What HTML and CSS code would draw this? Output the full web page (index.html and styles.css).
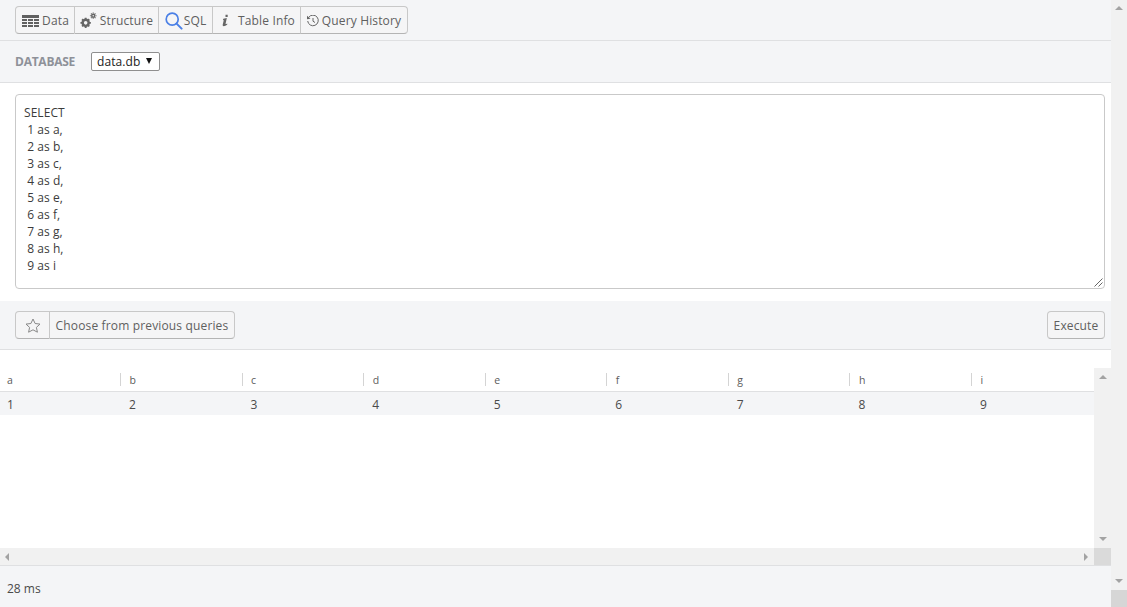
FILE: index.html
```html
<!DOCTYPE html>
<html lang="en">
<head>
<meta charset="utf-8">
<title>SQL</title>
<link rel="stylesheet" href="styles.css">
</head>
<body>
<div class="app">
  <main class="main">
    <nav class="toolbar">
      <div class="btn-group">
        <button class="btn btn-data">
          <svg class="ico" width="17" height="12" viewBox="0 0 17 12"><path fill="#606060" d="M0 0h17v3H0zM0 4h5v2H0zM6 4h5v2H6zM12 4h5v2h-5zM0 7h5v2H0zM6 7h5v2H6zM12 7h5v2h-5zM0 10h5v2H0zM6 10h5v2H6zM12 10h5v2h-5z"/></svg>
          <span>Data</span>
        </button>
        <button class="btn btn-structure">
          <svg class="ico" width="17" height="17" viewBox="0 0 18 17"><g fill="none" stroke="#666"><circle cx="6" cy="11" r="3.200" stroke-width="2.600"/><path stroke-width="2" d="M6 5.500v2M6 14.500v2M.5 11h2M9.500 11h2M2.200 7.200l1.400 1.400M8.400 13.400l1.400 1.400M2.200 14.800l1.400-1.400M8.400 8.600l1.400-1.400"/><circle cx="14" cy="3.500" r="1.600" stroke-width="1.600"/><path stroke-width="1.200" d="M14 0v1M14 6v1M10.500 3.500h1M16.500 3.500h1M11.600 1.100l.7.7M15.700 5.200l.7.7M11.600 5.900l.7-.7M15.700 1.800l.7-.7"/></g></svg>
          <span>Structure</span>
        </button>
        <button class="btn btn-sql">
          <svg class="ico" width="18" height="18" viewBox="0 0 18 18"><g fill="none" stroke="#4b80e6" stroke-width="1.700"><circle cx="7.200" cy="7.200" r="6"/><path stroke-linecap="round" stroke-width="2" d="M11.600 11.600l5 5"/></g></svg>
          <span>SQL</span>
        </button>
        <button class="btn btn-info">
          <svg class="ico" width="7" height="13" viewBox="0 0 8 13"><path fill="#666" d="M4 0h2.500v2.600H4zM1.500 4.500l4-.8-1.400 6.500c-.1.600.4.600 1.900-.3v1.200C4.500 12.300 3.200 13 2 13c-.9 0-1.400-.6-1.200-1.600L2 6.200l-.9-.2z"/></svg>
          <span>Table Info</span>
        </button>
        <button class="btn btn-history">
          <svg class="ico" width="12" height="12" viewBox="0 0 12 12"><g fill="none" stroke="#666" stroke-width="1"><path d="M1.700 2.300A5.300 5.300 0 1 1 .7 6"/><path d="M6 3v3.200l2 1.300"/></g><path fill="#666" d="M0 .8l3.500 2.900L0 4.200z"/></svg>
          <span>Query History</span>
        </button>
      </div>
    </nav>

    <section class="db-bar">
      <span class="db-label">DATABASE</span>
      <div class="db-select"><span>data.db</span><span class="caret"></span></div>
    </section>

    <section class="editor-wrap">
      <div class="editor">
        <pre class="sql">SELECT
 1 as a,
 2 as b,
 3 as c,
 4 as d,
 5 as e,
 6 as f,
 7 as g,
 8 as h,
 9 as i</pre>
        <svg class="grip" width="9" height="9" viewBox="0 0 9 9"><path fill="none" stroke="#666" d="M0.500 8.500l8-8M4.500 8.500l4-4"/></svg>
      </div>
    </section>

    <section class="query-bar">
      <div class="btn-group">
        <button class="btn btn-star">
          <svg width="16" height="15" viewBox="0 0 16 15"><path fill="none" stroke="#888" d="M8 1l2.100 4.500 4.900.6-3.600 3.300 1 4.800L8 11.800l-4.400 2.400 1-4.800L1 6.100l4.900-.6z"/></svg>
        </button>
        <button class="btn btn-prev">Choose from previous queries</button>
      </div>
      <button class="btn btn-exec">Execute</button>
    </section>

    <section class="results">
      <div class="results-body">
        <div class="table-wrap">
          <div class="grid head">
            <div class="th">a</div><div class="th">b</div><div class="th">c</div><div class="th">d</div><div class="th">e</div><div class="th">f</div><div class="th">g</div><div class="th">h</div><div class="th">i</div>
          </div>
          <div class="grid row">
            <div class="td">1</div><div class="td">2</div><div class="td">3</div><div class="td">4</div><div class="td">5</div><div class="td">6</div><div class="td">7</div><div class="td">8</div><div class="td">9</div>
          </div>
        </div>
        <div class="vbar inner"><span class="arrow up"></span><span class="arrow down"></span></div>
      </div>
      <div class="hbar">
        <div class="htrack"><span class="arrow left"></span><span class="arrow right"></span></div>
        <div class="corner"></div>
      </div>
    </section>

    <footer class="status">28 ms</footer>
  </main>
  <aside class="vbar outer">
    <span class="arrow up"></span>
    <div class="outer-bottom"><span class="arrow down"></span><div class="thumb"></div></div>
  </aside>
</div>
</body>
</html>
```

FILE: styles.css
```css
* { box-sizing: border-box; }
html, body { margin: 0; height: 607px; overflow: hidden; }
body { font-family: "Open Sans", "Noto Sans", sans-serif; font-size: 12px; color: #333; background: #fff; }

.app { display: flex; width: 1127px; height: 607px; }
.main { width: 1111px; display: flex; flex-direction: column; }

.toolbar { height: 41px; padding: 6px 15px 0; background: #f4f5f7; border-bottom: 1px solid #dfe0e2; }
.btn-group { display: flex; }
.btn {
  height: 28px; padding: 1px 0 0; margin: 0;
  font: 12px/1 "Open Sans", "Noto Sans", sans-serif; letter-spacing: .15px; color: #5f5f5f;
  background: #f5f5f6; border: 1px solid #c8c8c8; border-bottom-color: #b4b4b4;
  display: flex; align-items: center; justify-content: center;
}
.btn-group .btn + .btn { border-left: 0; }
.btn-group .btn:first-child { border-radius: 4px 0 0 4px; }
.btn-group .btn:last-child { border-radius: 0 4px 4px 0; }
.toolbar .btn { gap: 3px; }
.ico { display: block; flex: none; }
.btn-data { width: 60px; padding-left: 1px; }
.toolbar .btn-structure { width: 84px; gap: 3px; }
.toolbar .btn-sql { width: 54px; gap: 1px; }
.toolbar .btn-info { width: 88px; gap: 9px; padding-left: 4px; }
.btn-history { width: 107px; }

.db-bar { height: 42px; display: flex; align-items: center; padding-left: 15px; background: #f4f5f7; border-bottom: 1px solid #dfe0e2; }
.db-label { width: 76px; font-size: 12px; font-weight: 700; letter-spacing: -.25px; color: #8e9199; }
.db-select {
  width: 69px; height: 19px; padding: 0 5px; display: flex; align-items: center; gap: 5px;
  background: #fff; border: 1px solid #8f8f8f; border-radius: 2px; color: #222;
  font-family: "Open Sans", "Noto Sans", sans-serif; font-size: 12px; letter-spacing: .1px;
}
.caret { width: 0; height: 0; margin-top: -1px; border: 3.500px solid transparent; border-top: 6px solid #111; border-bottom: 0; }

.editor-wrap { height: 218px; padding: 11px 6px 12px 15px; background: #fff; }
.editor { position: relative; height: 195px; padding: 9px 8px; border: 1px solid #c9c9c9; border-radius: 4px; background: #fff; }
.sql { margin: 0; font: 12px/17px "Open Sans", "Noto Sans", sans-serif; letter-spacing: .05px; color: #3c3c3c; }
.grip { position: absolute; right: 1px; bottom: 1px; }

.query-bar { height: 49px; display: flex; align-items: flex-start; justify-content: space-between; padding: 10px 6px 0 15px; background: #f4f5f7; border-bottom: 1px solid #dfe0e2; }
.btn-star { width: 35px; }
.btn-prev { width: 185px; }
.btn-exec { width: 58px; border-radius: 4px; }

.results { height: 216px; display: flex; flex-direction: column; background: #fff; border-bottom: 1px solid #dfe0e2; }
.results-body { height: 198px; display: flex; padding-top: 18px; }
.table-wrap { width: 1094px; }
.grid { display: grid; grid-template-columns: repeat(9, 1fr); }
.head { height: 24px; border-bottom: 1px solid #dfe0e2; }
.th { position: relative; padding: 6px 0 0 7px; font-size: 10.500px; line-height: 13px; color: #5c5c5c; }
.th + .th { padding-left: 8px; }
.th + .th::before { content: ""; position: absolute; left: -1.500px; top: 5px; height: 13px; border-left: 1px solid #d4d4d4; }
.row { height: 23px; background: #f4f5f7; }
.td { padding: 5px 0 0 7px; font-size: 12px; line-height: 15px; color: #4a4a4a; }
.td + .td { padding-left: 7.500px; }

.vbar { background: #f1f1f1; display: flex; flex-direction: column; align-items: center; justify-content: space-between; }
.vbar.inner { width: 17px; padding: 7px 0; }
.vbar.outer { width: 16px; padding-top: 6px; }
.outer-bottom { width: 16px; display: flex; flex-direction: column; align-items: center; gap: 7px; }
.thumb { width: 16px; height: 17px; background: #d6d6d6; }

.hbar { height: 17px; display: flex; background: #f1f1f1; }
.htrack { width: 1094px; display: flex; align-items: center; justify-content: space-between; padding: 0 6px 0 5px; }
.corner { width: 17px; background: #dadada; }

.arrow { display: block; width: 0; height: 0; border-style: solid; border-color: transparent; }
.arrow.up { border-width: 0 4px 4px; border-bottom-color: #a3a3a3; }
.arrow.down { border-width: 4px 4px 0; border-top-color: #a3a3a3; }
.arrow.left { border-width: 4px 4px 4px 0; border-right-color: #a3a3a3; }
.arrow.right { border-width: 4px 0 4px 4px; border-left-color: #a3a3a3; }

.status { flex: 1; padding: 14px 0 0 7px; background: #f4f5f7; font-size: 12px; line-height: 17px; color: #4a4a4a; }
```
